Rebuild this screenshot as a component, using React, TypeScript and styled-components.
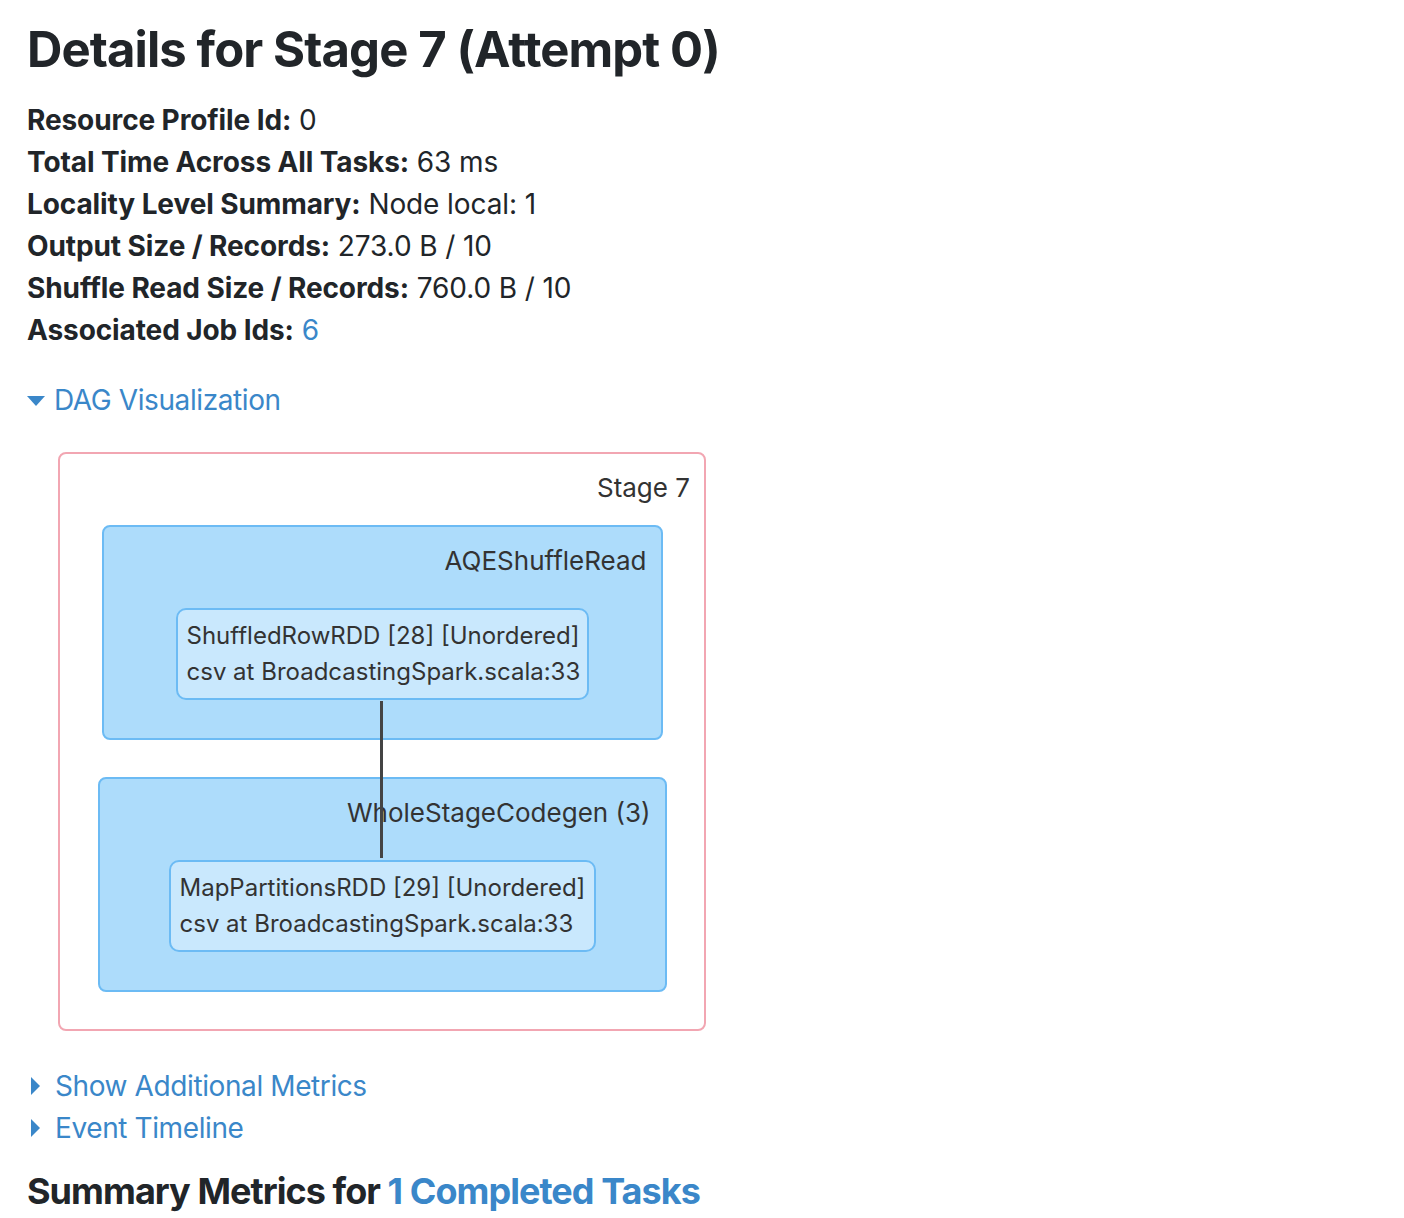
import React from "react";
import styled, { createGlobalStyle } from "styled-components";

type Fact = { label: string; value: string; link?: boolean };

type RddNode = { name: string; callSite: string; width: number };

type Cluster = { name: string; width: number; node: RddNode };

const facts: Fact[] = [
  { label: "Resource Profile Id:", value: "0" },
  { label: "Total Time Across All Tasks:", value: "63 ms" },
  { label: "Locality Level Summary:", value: "Node local: 1" },
  { label: "Output Size / Records:", value: "273.0 B / 10" },
  { label: "Shuffle Read Size / Records:", value: "760.0 B / 10" },
  { label: "Associated Job Ids:", value: "6", link: true },
];

const clusters: Cluster[] = [
  {
    name: "AQEShuffleRead",
    width: 561,
    node: {
      name: "ShuffledRowRDD [28] [Unordered]",
      callSite: "csv at BroadcastingSpark.scala:33",
      width: 413,
    },
  },
  {
    name: "WholeStageCodegen (3)",
    width: 569,
    node: {
      name: "MapPartitionsRDD [29] [Unordered]",
      callSite: "csv at BroadcastingSpark.scala:33",
      width: 427,
    },
  },
];

const GlobalStyle = createGlobalStyle`
  body {
    margin: 0;
    background: #ffffff;
    color: #212529;
    font-family: Inter, Roboto, "Liberation Sans", sans-serif;
    font-size: 28px;
    line-height: 42px;
    letter-spacing: -0.1px;
  }
`;

const App = () => {
  return (
    <>
      <GlobalStyle />
      <Page>
        <Title>Details for Stage 7 (Attempt 0)</Title>
        <FactList>
          {facts.map((fact) => (
            <FactRow key={fact.label}>
              <strong>{fact.label}</strong>{" "}
              {fact.link ? <Link>{fact.value}</Link> : fact.value}
            </FactRow>
          ))}
        </FactList>

        <Toggle open>
          <Arrow open />
          DAG Visualization
        </Toggle>

        <StageBox>
          <StageLabel>Stage 7</StageLabel>
          <ClusterList>
            {clusters.map((cluster) => (
              <ClusterBox key={cluster.name} width={cluster.width}>
                <ClusterLabel>{cluster.name}</ClusterLabel>
                <NodeBox width={cluster.node.width}>
                  <div>{cluster.node.name}</div>
                  <div>{cluster.node.callSite}</div>
                </NodeBox>
              </ClusterBox>
            ))}
          </ClusterList>
          <Edge />
        </StageBox>

        <ToggleList>
          <Toggle>
            <Arrow />
            Show Additional Metrics
          </Toggle>
          <Toggle>
            <Arrow />
            Event Timeline
          </Toggle>
        </ToggleList>

        <SubTitle>
          Summary Metrics for <Link>1 Completed Tasks</Link>
        </SubTitle>
      </Page>
    </>
  );
};

const Page = styled.div`
  padding: 21px 27px 0;
`;

const Title = styled.h3`
  margin: 0 0 20px;
  font-size: 49px;
  line-height: 58px;
  font-weight: 700;
  letter-spacing: -0.9px;
`;

const FactList = styled.ul`
  list-style: none;
  margin: 0;
  padding: 0;
`;

const FactRow = styled.li`
  strong {
    font-weight: 700;
  }
`;

const Link = styled.a`
  color: #3a87c9;
  text-decoration: none;
  cursor: pointer;
`;

const ToggleList = styled.div`
  margin-top: 34px;
`;

const Toggle = styled.div<{ open?: boolean }>`
  display: flex;
  align-items: center;
  color: #3a87c9;
  cursor: pointer;
  letter-spacing: -0.4px;
  margin-top: ${({ open }) => (open ? "28px" : "0")};
`;

const Arrow = styled.span<{ open?: boolean }>`
  display: inline-block;
  width: 0;
  height: 0;
  ${({ open }) =>
    open
      ? `
    border-top: 10px solid #3a87c9;
    border-left: 9px solid transparent;
    border-right: 9px solid transparent;
    margin: 2px 9px 0 0;
  `
      : `
    border-left: 9px solid #3a87c9;
    border-top: 9px solid transparent;
    border-bottom: 9px solid transparent;
    margin: 0 15px 0 4px;
  `}
`;

const StageBox = styled.div`
  position: relative;
  width: 648px;
  box-sizing: border-box;
  margin: 31px 0 0 31px;
  padding: 16px 14px 37px;
  border: 2px solid #f2a6b2;
  border-radius: 8px;
  color: #333333;
  letter-spacing: 0;
`;

const StageLabel = styled.div`
  text-align: right;
  font-size: 26px;
  line-height: 36px;
  margin-bottom: 19px;
`;

const ClusterList = styled.div`
  display: flex;
  flex-direction: column;
  align-items: center;
  gap: 37px;
`;

const ClusterBox = styled.div<{ width: number }>`
  width: ${({ width }) => width}px;
  box-sizing: border-box;
  display: flex;
  flex-direction: column;
  padding: 16px 14px 38px;
  background: #addcfb;
  border: 2px solid #6cbbf4;
  border-radius: 8px;
`;

const ClusterLabel = styled.div`
  text-align: right;
  font-size: 26px;
  line-height: 36px;
`;

const NodeBox = styled.div<{ width: number }>`
  width: ${({ width }) => width}px;
  box-sizing: border-box;
  align-self: center;
  margin-top: 29px;
  padding: 8px 9px;
  background: #c9e8fd;
  border: 2px solid #6cbbf4;
  border-radius: 10px;
  font-size: 24px;
  line-height: 36px;
  white-space: nowrap;
`;

const Edge = styled.div`
  position: absolute;
  left: 320px;
  top: 247px;
  width: 3px;
  height: 157px;
  background: #444444;
`;

const SubTitle = styled.h4`
  margin: 21px 0 0;
  font-size: 36px;
  line-height: 43px;
  font-weight: 700;
  letter-spacing: -0.95px;
`;

export default App;
